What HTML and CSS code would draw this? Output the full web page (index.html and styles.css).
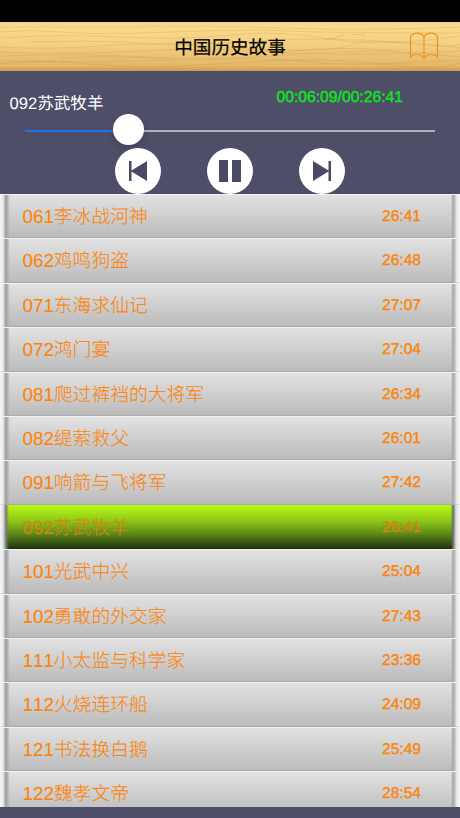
FILE: index.html
```html
<!DOCTYPE html>
<html lang="zh-CN">
<head>
<meta charset="utf-8">
<title>中国历史故事</title>
<link rel="stylesheet" href="styles.css">
</head>
<body>
<div class="status"></div>
<header class="nav">
  <svg class="grain" viewBox="0 0 460 49" preserveAspectRatio="none" aria-hidden="true">
    <g fill="none" stroke="#c98f42" stroke-width="1">
      <path opacity=".22" d="M0 5H130Q200 3 280 6T460 5M0 16Q60 12 120 15T230 13T330 17T460 14M0 25Q50 28 100 24T240 26T350 23T460 26M0 34Q80 31 150 35T300 32T460 35"/>
      <path opacity=".25" d="M0 10Q30 7 60 10T170 10T290 9T460 11M30 20Q90 18 140 21T260 19T400 21T460 19M0 30Q70 33 140 29T280 30T460 29M0 39Q90 41 180 38T310 40T460 38"/>
      <path opacity=".3" d="M0 42Q40 37 90 42T200 43T300 38T390 43T460 41M60 36Q110 33 170 37M290 29Q340 24 400 29M325 18Q340 15 345 12M352 13Q365 11 365 15M0 46H180Q230 43 280 46H460"/>
    </g>
  </svg>
  <h1 class="title">中国历史故事</h1>
  <svg class="book" viewBox="0 0 30 28" aria-hidden="true">
    <path d="M15 5C12.500 0 4 0 1.500 4.500V25.500Q3 22.500 8 22.500Q12.500 22.500 15 26.500Q17.500 22.500 22 22.500Q27 22.500 28.500 25.500V4.500C26 0 17.500 0 15 5V26.500"/>
  </svg>
</header>
<section class="player">
  <div class="info"><span class="song">092苏武牧羊</span><span class="clock">00:06:09/00:26:41</span></div>
  <div class="slider"><div class="played"></div><div class="knob"></div></div>
  <div class="controls">
    <svg viewBox="0 0 46 46"><circle cx="23" cy="23" r="23"/><path d="M14 13h2.500v9.500L32 13v20L16.500 23.500V33H14z"/></svg>
    <svg viewBox="0 0 46 46"><circle cx="23" cy="23" r="23"/><path d="M12 12h9v22h-9zM25 12h9v22h-9z"/></svg>
    <svg viewBox="0 0 46 46"><circle cx="23" cy="23" r="23"/><path d="M32 13h-2.500v9.500L14 13v20l15.500-9.500V33H32z"/></svg>
  </div>
</section>
<ul class="list">
  <li><span>061李冰战河神</span><time>26:41</time></li>
  <li><span>062鸡鸣狗盗</span><time>26:48</time></li>
  <li><span>071东海求仙记</span><time>27:07</time></li>
  <li><span>072鸿门宴</span><time>27:04</time></li>
  <li><span>081爬过裤裆的大将军</span><time>26:34</time></li>
  <li><span>082缇萦救父</span><time>26:01</time></li>
  <li><span>091响箭与飞将军</span><time>27:42</time></li>
  <li class="current"><span>092苏武牧羊</span><time>26:41</time></li>
  <li><span>101光武中兴</span><time>25:04</time></li>
  <li><span>102勇敢的外交家</span><time>27:43</time></li>
  <li><span>111小太监与科学家</span><time>23:36</time></li>
  <li><span>112火烧连环船</span><time>24:09</time></li>
  <li><span>121书法换白鹅</span><time>25:49</time></li>
  <li><span>122魏孝文帝</span><time>28:54</time></li>
</ul>
</body>
</html>
```
FILE: styles.css
```css
* { box-sizing: border-box; }
body {
  margin: 0;
  height: 818px;
  display: flex;
  flex-direction: column;
  overflow: hidden;
  background: #4e4e68;
  font-family: "Liberation Sans", "Noto Sans CJK SC", sans-serif;
  font-kerning: none;
  text-rendering: geometricPrecision;
}
.status { flex: none; height: 22px; background: #000; }
.nav {
  flex: none;
  height: 49px;
  display: grid;
  grid-template-columns: 1fr auto 1fr;
  align-items: center;
  position: relative;
  background: linear-gradient(#f3d588 0, #fada8c 8%, #f3d083 45%, #e2b668 92%, #c99a4e 100%);
}
.grain { position: absolute; inset: 0; width: 100%; height: 100%; }
.title {
  grid-column: 2;
  margin: 2px 0 0;
  font-size: 18.6px;
  line-height: 28px;
  font-weight: 400;
  color: #000;
  position: relative;
  -webkit-text-stroke: .2px #000;
}
.book {
  width: 30px;
  height: 28px;
  justify-self: end;
  margin: 0 21px 1px 0;
  position: relative;
  fill: none;
  stroke: #f78f20;
  stroke-width: 1.2;
}
.player { flex: none; height: 123px; }
.info {
  height: 48px;
  padding: 0 57px 0 9.500px;
  display: flex;
  justify-content: space-between;
}
.song {
  margin-top: 21px;
  font-size: 16.6px;
  line-height: 24px;
  color: #fff;
}
.clock {
  margin-top: 17px;
  font-size: 15.7px;
  line-height: 20px;
  color: #0ce818;
  -webkit-text-stroke: .4px #0ce818;
}
.slider {
  height: 23px;
  margin: 0 25px;
  display: flex;
  align-items: center;
  background: linear-gradient(#b0b0bd, #b0b0bd) 0 10.500px / 100% 2px no-repeat;
}
.played { width: 88px; height: 2px; background: #1777e5; }
.knob {
  width: 31px;
  height: 31px;
  margin: -6px 0 -3px;
  border-radius: 50%;
  background: #fff;
  box-shadow: 0 3px 6px rgba(0, 0, 0, .18);
}
.controls {
  display: flex;
  justify-content: center;
  gap: 46px;
  margin-top: 6px;
}
.controls svg { width: 46px; height: 46px; fill: #fff; position: relative; }
.controls path { fill: #4b4a65; }
.list {
  flex: none;
  margin: 0;
  padding: 0;
  height: 613px;
  overflow: hidden;
  list-style: none;
  color: #fb850c;
}
.list li {
  height: 44.42px;
  padding: 1.5px 39px 0 22.500px;
  display: flex;
  justify-content: space-between;
  align-items: center;
  font-size: 18.8px;
  font-weight: 300;
  line-height: 28px;
  background:
    linear-gradient(#f1f1f1, #f1f1f1) top / 100% 1px no-repeat,
    linear-gradient(90deg, #f6f6f6 0, #eaeaea 3px, #999 6px, #acacac 7px, rgba(190, 190, 190, 0) 10px) left / 10px no-repeat,
    linear-gradient(270deg, #f6f6f6 0, #eee 3px, #c4c4c4 5px, #a5a5a5 7px, rgba(190, 190, 190, 0) 9px) right / 9px no-repeat,
    linear-gradient(#e3e3e4, #bcbcbc 96%, #a5a5a5);
}
.list span { -webkit-text-stroke: .1px currentColor; }
.list time {
  font-size: 15.6px;
  font-weight: 400;
  -webkit-text-stroke: .4px currentColor;
}
.list .current {
  color: #d98211;
  background:
    linear-gradient(90deg, #f6f6f6 0, #e0e0e0 3px, #777 6px, rgba(80, 80, 80, 0) 9px) left / 9px no-repeat,
    linear-gradient(270deg, #f6f6f6 0, #ddd 4px, #666 7px, rgba(80, 80, 80, 0) 9px) right / 9px no-repeat,
    linear-gradient(#b9fa14, #8fc818 35%, #5e8b18 65%, #253b12 96%, #1b2b10);
}
```
